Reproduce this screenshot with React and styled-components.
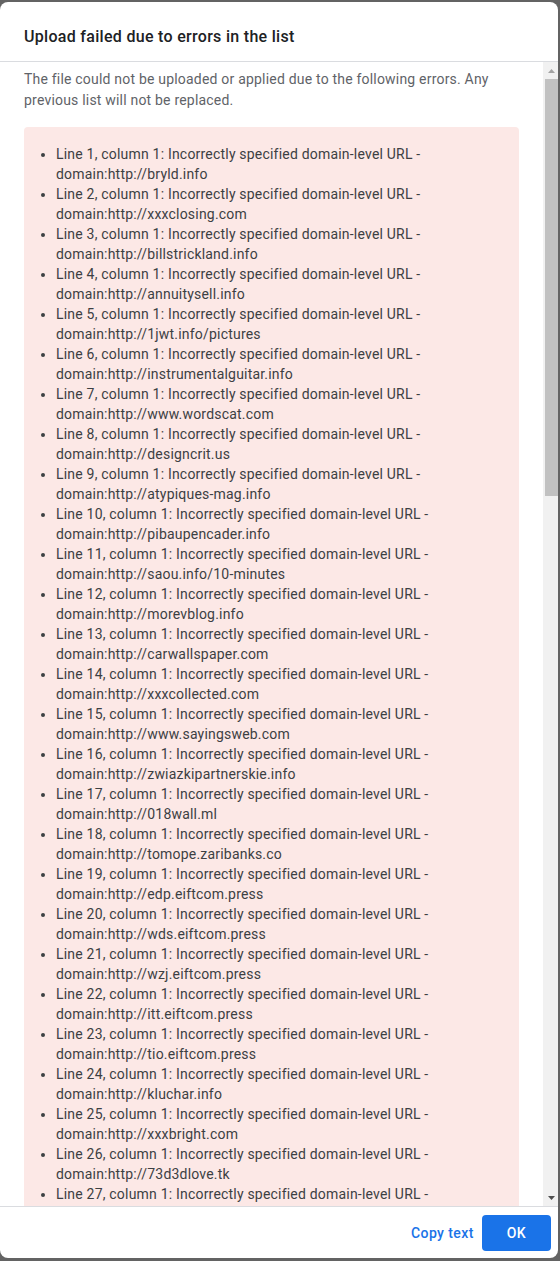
import React from "react"
import styled, { createGlobalStyle } from "styled-components"

const GlobalStyle = createGlobalStyle`
  html, body {
    height: 100%;
  }
  body {
    margin: 0;
    background: #636363;
    font-family: Roboto, "Noto Sans", Arial, sans-serif;
    -webkit-font-smoothing: antialiased;
  }
  #root {
    height: 100%;
  }
`

const S = {} // styled-components namespace

S.Backdrop = styled.div`
  height: 100%;
  padding: 2px 2px 3px 0;
  box-sizing: border-box;
  display: flex;
`

S.Dialog = styled.div`
  flex: 1;
  display: flex;
  flex-direction: column;
  background: #fff;
  border-radius: 8px;
  overflow: hidden;
`

S.Header = styled.header`
  flex: none;
  height: 60px;
  box-sizing: border-box;
  display: flex;
  align-items: center;
  padding: 9px 24px 0;
  border-bottom: 1px solid #dadce0;
`

S.Title = styled.h2`
  margin: 0;
  font-size: 16px;
  font-weight: 500;
  color: #202124;
  letter-spacing: 0.3px;
`

S.BodyRow = styled.div`
  flex: 1;
  min-height: 0;
  display: flex;
`

S.Body = styled.div`
  flex: 1;
  min-width: 0;
  overflow: hidden;
  padding: 7px 24px 24px;
`

/* classic Chrome scrollbar, drawn since the page hides native ones */
S.Scrollbar = styled.div`
  flex: none;
  width: 15px;
  display: flex;
  flex-direction: column;
  background: #f1f1f1;
`

S.ScrollButton = styled.div`
  flex: none;
  height: 17px;
  display: flex;
  align-items: center;
  justify-content: center;
  padding-left: 1px;
  color: ${({ $active }) => ($active ? "#505050" : "#a3a3a3")};
`

S.Track = styled.div`
  flex: 1;
  padding-left: 2px;
`

S.Thumb = styled.div`
  height: 417px;
  background: #c1c1c1;
`

S.Description = styled.p`
  margin: 0 0 16px;
  font-size: 14px;
  line-height: 21px;
  letter-spacing: 0.2px;
  color: #5f6368;
`

S.ErrorBox = styled.div`
  background: #fce8e6;
  border-radius: 4px;
  padding: 17px 16px 16px;
`

S.List = styled.ul`
  margin: 0;
  padding-left: 16px;
  font-size: 14px;
  line-height: 20px;
  letter-spacing: 0.2px;
  color: #3c4043;
`

S.Footer = styled.footer`
  flex: none;
  display: flex;
  justify-content: flex-end;
  align-items: center;
  padding: 8px 7px 7px;
  border-top: 1px solid #dadce0;
`

S.Button = styled.button`
  height: 36px;
  border: none;
  border-radius: 4px;
  font-family: inherit;
  font-size: 14px;
  font-weight: 500;
  letter-spacing: 0.4px;
  cursor: pointer;
  padding: ${({ $primary }) => ($primary ? "0 25px" : "0 8px")};
  background: ${({ $primary }) => ($primary ? "#1a73e8" : "transparent")};
  color: ${({ $primary }) => ($primary ? "#fff" : "#1a73e8")};
`

const Arrow = ({ down }) => (
  <svg width="7" height="4" viewBox="0 0 7 4">
    <polygon
      points={down ? "0,0 7,0 3.5,4" : "3.5,0 7,4 0,4"}
      fill="currentColor"
    />
  </svg>
)

const domains = [
  "bryld.info",
  "xxxclosing.com",
  "billstrickland.info",
  "annuitysell.info",
  "1jwt.info/pictures",
  "instrumentalguitar.info",
  "www.wordscat.com",
  "designcrit.us",
  "atypiques-mag.info",
  "pibaupencader.info",
  "saou.info/10-minutes",
  "morevblog.info",
  "carwallspaper.com",
  "xxxcollected.com",
  "www.sayingsweb.com",
  "zwiazkipartnerskie.info",
  "018wall.ml",
  "tomope.zaribanks.co",
  "edp.eiftcom.press",
  "wds.eiftcom.press",
  "wzj.eiftcom.press",
  "itt.eiftcom.press",
  "tio.eiftcom.press",
  "kluchar.info",
  "xxxbright.com",
  "73d3dlove.tk",
  "bestwallpapers.info",
  "qtr.eiftcom.press",
  "mvn.eiftcom.press",
  "lyricsportal.info",
  "freegamesdl.info",
  "xxxstarlet.com",
  "kpopnews.info/latest",
  "tubefun.tk",
  "sweetrecipes.info",
  "ujk.eiftcom.press",
  "www.quotesdepot.com",
  "carsnews.ml",
  "mobilethemes.info",
  "seoarticles.us",
]

export default function App() {
  return (
    <>
      <GlobalStyle />
      <S.Backdrop>
        <S.Dialog role="dialog">
          <S.Header>
            <S.Title>Upload failed due to errors in the list</S.Title>
          </S.Header>
          <S.BodyRow>
            <S.Body>
              <S.Description>
                The file could not be uploaded or applied due to the following
                errors. Any previous list will not be replaced.
              </S.Description>
              <S.ErrorBox>
                <S.List>
                  {domains.map((d, i) => (
                    <li key={i}>
                      Line {i + 1}, column 1: Incorrectly specified domain-level
                      URL - domain:http://{d}
                    </li>
                  ))}
                </S.List>
              </S.ErrorBox>
            </S.Body>
            <S.Scrollbar>
              <S.ScrollButton>
                <Arrow />
              </S.ScrollButton>
              <S.Track>
                <S.Thumb />
              </S.Track>
              <S.ScrollButton $active>
                <Arrow down />
              </S.ScrollButton>
            </S.Scrollbar>
          </S.BodyRow>
          <S.Footer>
            <S.Button>Copy text</S.Button>
            <S.Button $primary>OK</S.Button>
          </S.Footer>
        </S.Dialog>
      </S.Backdrop>
    </>
  )
}
